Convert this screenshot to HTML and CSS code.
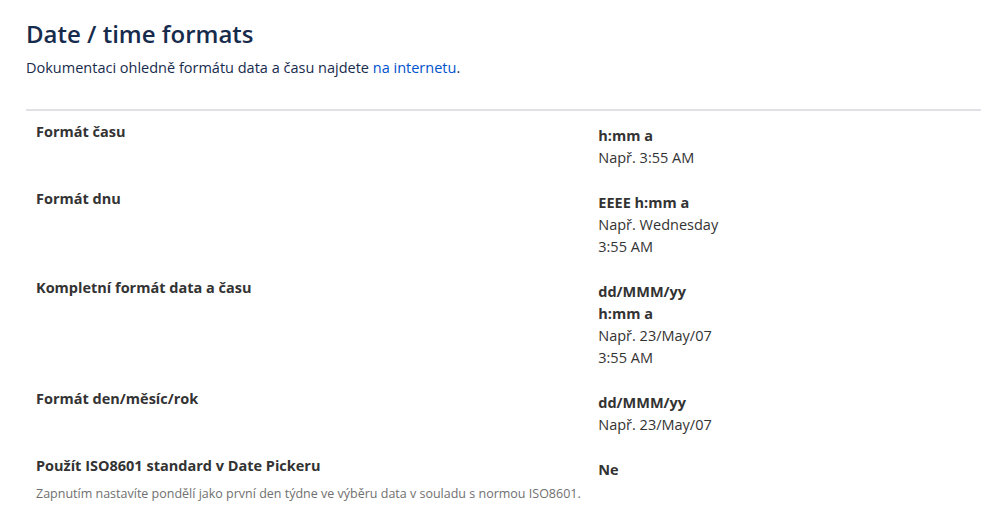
FILE: index.html
```html
<!DOCTYPE html>
<html lang="cs">
<head>
<meta charset="utf-8">
<title>Date / time formats</title>
<link rel="stylesheet" href="styles.css">
</head>
<body>
<main class="page">
  <header class="page-header">
    <h1 class="title">Date / time formats</h1>
    <p class="intro">Dokumentaci ohledně formátu data a času najdete <a class="link" href="#">na internetu</a>.</p>
  </header>
  <section class="settings">
    <div class="row">
      <div class="label"><div class="label-name">Formát času</div></div>
      <div class="value"><div class="fmt">h:mm a</div><div class="example">Např. 3:55 AM</div></div>
    </div>
    <div class="row">
      <div class="label"><div class="label-name">Formát dnu</div></div>
      <div class="value"><div class="fmt">EEEE h:mm a</div><div class="example">Např. Wednesday<br>3:55 AM</div></div>
    </div>
    <div class="row">
      <div class="label"><div class="label-name">Kompletní formát data a času</div></div>
      <div class="value"><div class="fmt">dd/MMM/yy<br>h:mm a</div><div class="example">Např. 23/May/07<br>3:55 AM</div></div>
    </div>
    <div class="row">
      <div class="label"><div class="label-name">Formát den/měsíc/rok</div></div>
      <div class="value"><div class="fmt">dd/MMM/yy</div><div class="example">Např. 23/May/07</div></div>
    </div>
    <div class="row">
      <div class="label">
        <div class="label-name">Použít ISO8601 standard v Date Pickeru</div>
        <div class="desc">Zapnutím nastavíte pondělí jako první den týdne ve výběru data v souladu s normou ISO8601.</div>
      </div>
      <div class="value"><div class="fmt">Ne</div></div>
    </div>
  </section>
</main>
</body>
</html>
```
FILE: styles.css
```css
html, body {
  margin: 0;
  padding: 0;
  background: #ffffff;
}
body {
  font-family: "Open Sans", "Noto Sans", "Liberation Sans", sans-serif;
  font-size: 14.5px;
  line-height: 22px;
  color: #172b4d;
}
.page {
  padding: 16px 18px 0 26px;
}
.title {
  margin: 0;
  font-size: 24px;
  line-height: 36px;
  font-weight: 600;
  color: #172b4d;
}
.intro {
  margin: 5px 0 0;
}
.link {
  color: #0052cc;
  text-decoration: none;
}
.settings {
  margin-top: 30px;
  border-top: 2px solid #dfe1e6;
}
.row {
  display: grid;
  grid-template-columns: 59.5% 1fr;
  padding: 10px 0 9px 10px;
}
.label-name {
  font-weight: 700;
  color: #333333;
}
.value {
  padding-top: 4px;
  color: #333333;
}
.fmt {
  font-weight: 700;
}
.desc {
  margin-top: 9px;
  font-size: 12.5px;
  line-height: 16px;
  color: #707070;
}
```
